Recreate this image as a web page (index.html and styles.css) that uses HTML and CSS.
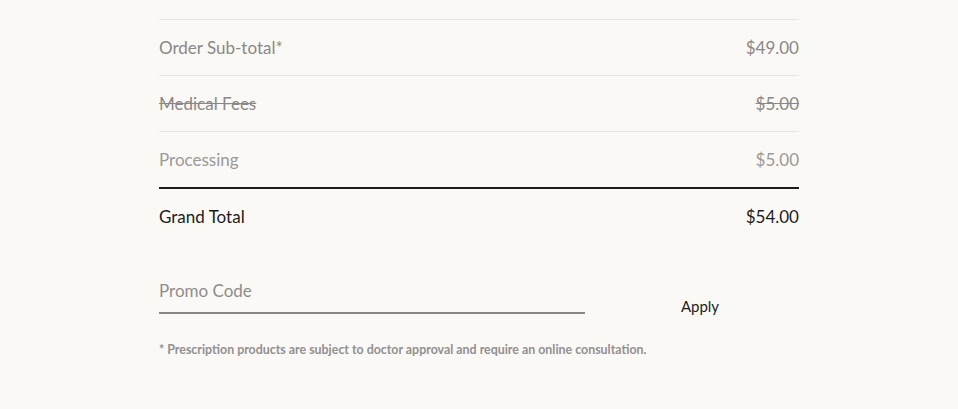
FILE: index.html
```html
<!DOCTYPE HTML>
<html lang="en">
  <head>
    <title>Order Summary</title>
    <meta charset="utf-8">
    <link rel="stylesheet" href="styles.css">
  </head>
  <body>

  <div class="summary">
    <div class="row">
      <span>Order Sub-total*</span>
      <span>$49.00</span>
    </div>
    <div class="row struck">
      <span>Medical Fees</span>
      <span>$5.00</span>
    </div>
    <div class="row light last">
      <span>Processing</span>
      <span>$5.00</span>
    </div>
    <div class="row total">
      <span>Grand Total</span>
      <span>$54.00</span>
    </div>

    <form class="promo">
      <input class="promo-input" type="text" placeholder="Promo Code">
      <button class="promo-apply" type="button">Apply</button>
    </form>

    <p class="note">* Prescription products are subject to doctor approval and require an online consultation.</p>
  </div>

  </body>
</html>
```

FILE: styles.css
```css
html {
  height: 100%;
}
body {
  margin: 0;
  padding: 0;
  background: #faf9f6;
  color: #1c1c1c;
  font-family: Lato, "Noto Sans", sans-serif;
  font-size: 17px;
  height: 100%;
}

.summary {
  width: 640px;
  margin: 0 auto;
  padding-top: 19px;
}

.row {
  display: flex;
  justify-content: space-between;
  align-items: center;
  height: 55px;
  border-top: 1px solid #ebe4dc;
  color: #8a8886;
}

.row.struck span {
  text-decoration: line-through;
}

.row.light {
  color: #9b9997;
}

.row.total {
  border-top: 2px solid #1c1c1c;
  color: #1c1c1c;
  height: 55px;
}

.promo {
  display: flex;
  align-items: flex-end;
  margin-top: 36px;
}

.promo-input {
  width: 426px;
  box-sizing: border-box;
  border: none;
  border-bottom: 2px solid #8a8783;
  background: transparent;
  font: 17px Lato, "Noto Sans", sans-serif;
  color: #1c1c1c;
  padding: 0 0 11px 0;
  outline: none;
}

.promo-input::placeholder {
  color: #8f8d8b;
}

.promo-apply {
  flex: 1;
  border: none;
  background: transparent;
  font: 15px Lato, "Noto Sans", sans-serif;
  color: #1c1c1c;
  padding: 0 0 0 16px;
  margin-bottom: -1px;
  cursor: pointer;
}

.note {
  margin: 28px 0 0 0;
  font-size: 12.4px;
  font-weight: bold;
  color: #929090;
}
```
